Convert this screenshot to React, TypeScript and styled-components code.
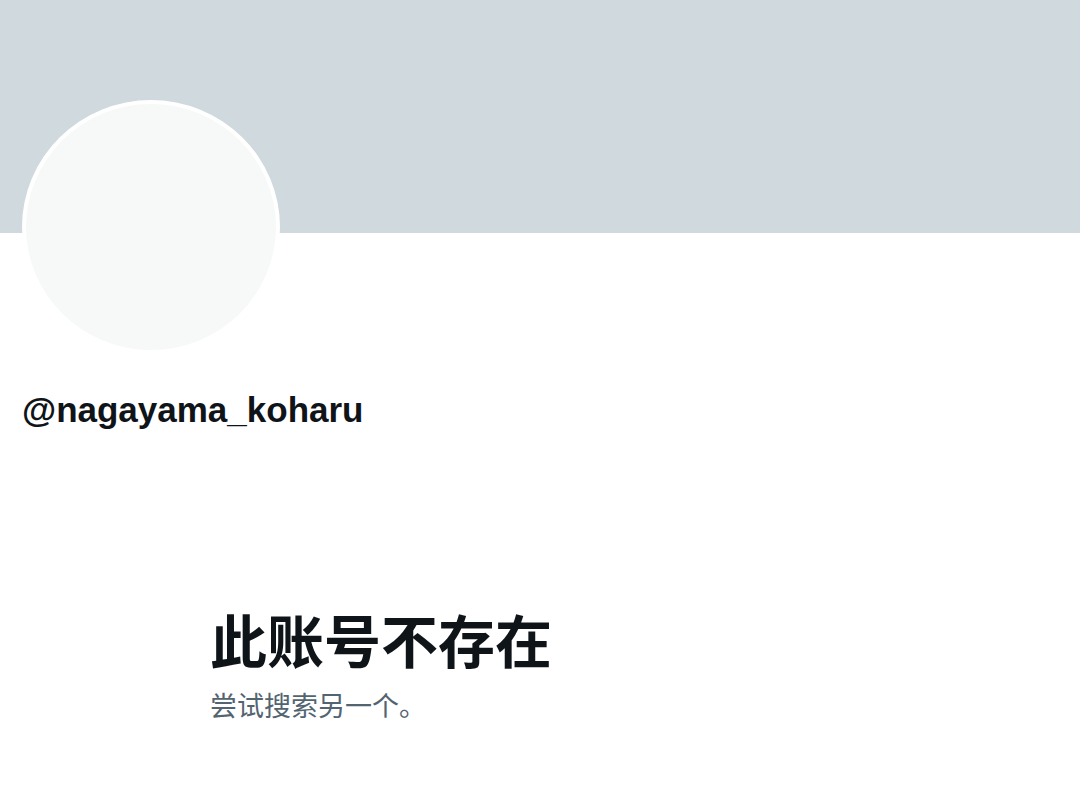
import React from "react";
import styled, { createGlobalStyle } from "styled-components";

const Global = createGlobalStyle`
  html, body { margin: 0; padding: 0; background: #ffffff; }
  body { font-family: "Liberation Sans", "Noto Sans CJK SC", sans-serif; }
`;

const Page = styled.div`
  width: 1080px;
  height: 802px;
  overflow: hidden;
  background: #ffffff;
  display: flex;
  flex-direction: column;
`;

const Banner = styled.div`
  height: 233px;
  background: #cfd9de;
  flex-shrink: 0;
`;

const Profile = styled.div`
  display: flex;
  flex-direction: column;
  align-items: flex-start;
  padding: 0 22px;
`;

const Avatar = styled.div`
  position: relative;
  width: 250px;
  height: 246px;
  margin-top: -133px;
  border-radius: 50%;
  border: 4px solid #ffffff;
  background: #f7f9f9;
`;

const Handle = styled.div`
  margin-top: 35px;
  font-family: "Liberation Sans", Arial, sans-serif;
  font-weight: 700;
  font-size: 35px;
  line-height: 42px;
  color: #0f1419;
`;

const Empty = styled.div`
  display: flex;
  flex-direction: column;
  padding-left: 210px;
  margin-top: 174px;
`;

const Title = styled.div`
  font-family: "Noto Sans CJK SC", sans-serif;
  font-weight: 700;
  font-size: 57px;
  line-height: 67px;
  color: #0f1419;
`;

const Subtitle = styled.div`
  margin-top: 17px;
  font-family: "Noto Sans CJK SC", sans-serif;
  font-weight: 400;
  font-size: 27px;
  line-height: 32px;
  color: #536471;
`;

export default function App() {
  return (
    <Page>
      <Global />
      <Banner />
      <Profile>
        <Avatar />
        <Handle>@nagayama_koharu</Handle>
      </Profile>
      <Empty>
        <Title>此账号不存在</Title>
        <Subtitle>尝试搜索另一个。</Subtitle>
      </Empty>
    </Page>
  );
}
